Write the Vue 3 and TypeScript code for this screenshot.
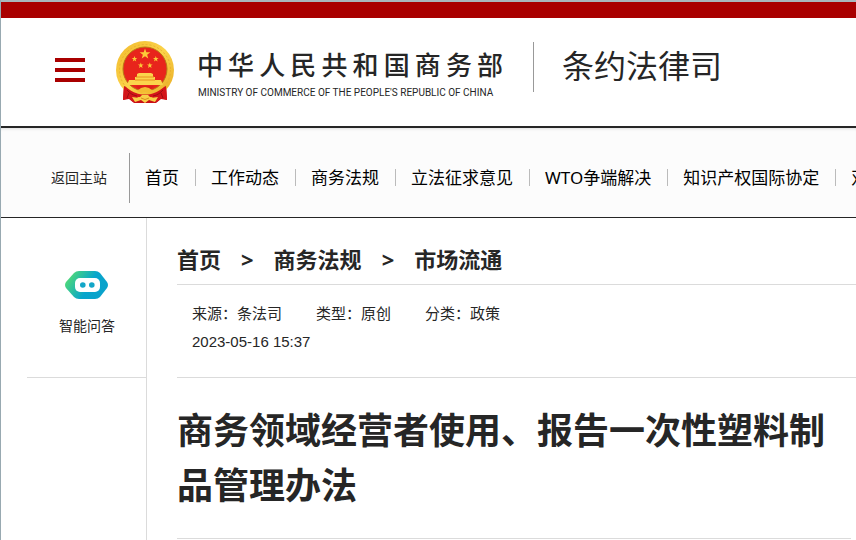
<script setup lang="ts">
interface Meta {
  label: string
  value: string
}

const navItems: string[] = [
  '首页',
  '工作动态',
  '商务法规',
  '立法征求意见',
  'WTO争端解决',
  '知识产权国际协定',
  '双边',
]

const crumbs: string[] = ['首页', '商务法规', '市场流通']

const meta: Meta[] = [
  { label: '来源', value: '条法司' },
  { label: '类型', value: '原创' },
  { label: '分类', value: '政策' },
]

function star(cx: number, cy: number, r: number): string {
  const points: string[] = []
  for (let i = 0; i < 10; i++) {
    const radius = i % 2 === 0 ? r : r * 0.4
    const angle = (Math.PI / 5) * i - Math.PI / 2
    points.push(`${(cx + radius * Math.cos(angle)).toFixed(2)},${(cy + radius * Math.sin(angle)).toFixed(2)}`)
  }
  return points.join(' ')
}

const stars: string[] = [
  star(29, 13, 5.6),
  star(18.5, 18, 3),
  star(39.8, 18, 3),
  star(24.8, 24.5, 3),
  star(33.8, 24.5, 3),
]
</script>

<template>
  <div class="page">
    <div class="topbar"></div>
    <header class="header">
      <button class="menu" type="button" aria-label="菜单">
        <span></span>
        <span></span>
        <span></span>
      </button>
      <a class="brand" href="#">
        <svg class="emblem" viewBox="0 0 58 63" aria-hidden="true">
          <defs>
            <linearGradient id="gold" x1="0" y1="0" x2="1" y2="1">
              <stop offset="0" stop-color="#f2ba2c" />
              <stop offset="0.5" stop-color="#fbd34a" />
              <stop offset="1" stop-color="#e7a820" />
            </linearGradient>
          </defs>
          <path d="M8 43 L7 59 L13 58 L18 62 H40 L45 58 L51 59 L50 43 Z" fill="#c90f16" />
          <circle cx="29" cy="29" r="29" fill="url(#gold)" />
          <circle cx="29" cy="29" r="25.5" fill="none" stroke="#e9b030" stroke-width="1" stroke-dasharray="2 2" />
          <circle cx="29" cy="28" r="22" fill="#e8241c" stroke="#b97716" stroke-width="1" />
          <polygon v-for="points in stars" :key="points" :points="points" fill="#fcca38" />
          <path d="M21 33 L23 32 H35 L37 33 V36 H39 V39 H45 L47 44 H11 L13 39 H19 V36 H21 Z" fill="#fbd44c" />
          <path d="M20 36 H38 M19 39 H39" stroke="#e9901f" stroke-width="1" />
          <path d="M20 45 H38 L35 48 H23 Z" fill="#dc2019" />
          <path d="M8 45 C11 46 14 50 20 52 C25 54 33 54 38 52 C44 50 47 46 50 45 L51 59 L45 57 L41 61 L36 56 H22 L17 61 L13 57 L7 59 Z" fill="#d4151a" />
          <path d="M11 49 C14 52 16 54 21 55 M47 49 C44 52 42 54 37 55 M11 57 L13 52 M47 57 L45 52" fill="none" stroke="#9c0d12" stroke-width="1" />
          <path d="M21 50 L25 47 L29 46 L33 47 L37 50 L33 52 L29 51 L25 52 Z" fill="#f4bb32" />
          <path d="M16 56 L23 57 L26 54 H32 L35 57 L42 56 L39 61 L33 59 L29 62 L25 59 L19 61 Z" fill="#f8cf48" />
          <path d="M25 57 Q29 60 33 57" fill="none" stroke="#d98e1e" stroke-width="1" />
        </svg>
        <span class="brand-text">
          <span class="brand-cn">中华人民共和国商务部</span>
          <span class="brand-en">MINISTRY OF COMMERCE OF THE PEOPLE'S REPUBLIC OF CHINA</span>
        </span>
      </a>
      <div class="department">条约法律司</div>
    </header>

    <nav class="nav">
      <a class="back" href="#">返回主站</a>
      <ul class="nav-list">
        <li v-for="item in navItems" :key="item">
          <a href="#">{{ item }}</a>
        </li>
      </ul>
    </nav>

    <div class="body">
      <aside class="sidebar">
        <a class="assistant" href="#">
          <svg class="robot" viewBox="0 0 44 28" aria-hidden="true">
            <defs>
              <linearGradient id="robot-fill" x1="0" y1="0.2" x2="1" y2="0.6">
                <stop offset="0.05" stop-color="#50da76" />
                <stop offset="0.6" stop-color="#08a5cc" />
                <stop offset="1" stop-color="#0aa2cb" />
              </linearGradient>
            </defs>
            <path d="M14 0 H30 Q33 0 35 2 L42 11 Q44 14 42 17 L35 26 Q33 28 30 28 H14 Q11 28 9 26 L1 17 Q-1 14 1 11 L9 2 Q11 0 14 0 Z" fill="url(#robot-fill)" />
            <rect x="10" y="7" width="25" height="14" rx="5" fill="#fff" />
            <circle cx="17.8" cy="14" r="2.8" fill="#12a6c8" />
            <circle cx="26.8" cy="14" r="2.8" fill="#12a6c8" />
          </svg>
          <span>智能问答</span>
        </a>
      </aside>
      <main class="content">
        <div class="crumbs">
          <template v-for="(crumb, index) in crumbs" :key="crumb">
            <span v-if="index > 0">&gt;</span>
            <a href="#">{{ crumb }}</a>
          </template>
        </div>
        <div class="meta">
          <div class="meta-row">
            <span v-for="entry in meta" :key="entry.label">{{ entry.label }}：{{ entry.value }}</span>
          </div>
          <time datetime="2023-05-16T15:37">2023-05-16 15:37</time>
        </div>
        <h1 class="title">商务领域经营者使用、报告一次性塑料制品管理办法</h1>
      </main>
    </div>
  </div>
</template>

<style>
body {
  background: #fff;
}
</style>

<style scoped>
.page {
  display: flex;
  flex-direction: column;
  box-sizing: border-box;
  min-height: 100vh;
  border-left: 1px solid #98a9b1;
  overflow: hidden;
  color: #262626;
  font-family: "Liberation Sans", "Noto Sans CJK SC", sans-serif;
}

a {
  color: inherit;
  text-decoration: none;
}

.topbar {
  height: 16px;
  border-top: 2px solid #a9b8bd;
  background: #a90000;
}

.header {
  display: flex;
  align-items: center;
  height: 108px;
  padding-left: 54px;
  border-bottom: 2px solid #262626;
  white-space: nowrap;
}

.menu {
  display: flex;
  flex-direction: column;
  gap: 6px;
  width: 30px;
  padding: 0 0 4px;
  border: 0;
  background: none;
}

.menu span {
  height: 4px;
  background: #a90000;
}

.brand {
  display: flex;
  align-items: center;
  margin-left: 31px;
}

.emblem {
  width: 58px;
  height: 63px;
}

.brand-text {
  display: flex;
  flex-direction: column;
  width: 306px;
  margin-left: 23px;
  padding-top: 5px;
}

.brand-cn {
  font-size: 26px;
  font-weight: 500;
  line-height: 36px;
  text-align-last: justify;
}

.brand-en {
  padding-left: 1px;
  font-family: Roboto, "Liberation Sans", sans-serif;
  font-size: 10px;
  line-height: 18px;
}

.department {
  margin-left: 30px;
  margin-bottom: 10px;
  padding-left: 28px;
  border-left: 1px solid #999;
  font-size: 32px;
  line-height: 50px;
}

.nav {
  display: flex;
  align-items: center;
  height: 89px;
  padding-left: 50px;
  border-bottom: 1px solid #262626;
  background: #fcfcfc;
  box-shadow: inset 0 3px 3px -2px #ddd;
  white-space: nowrap;
}

.back {
  margin-top: 10px;
  padding-right: 22px;
  border-right: 1px solid #999;
  font-size: 14px;
  line-height: 50px;
}

.nav-list {
  display: flex;
  margin: 10px 0 0;
  padding: 0;
  list-style: none;
  color: #000;
  font-family: "Noto Sans", "Noto Sans CJK SC", sans-serif;
  font-size: 17px;
  line-height: 17px;
}

.nav-list li {
  padding: 0 16px 0 15px;
  border-right: 1px solid #bbb;
}

.body {
  display: flex;
  flex: 1;
}

.sidebar {
  flex: none;
  box-sizing: border-box;
  width: 146px;
  padding-left: 26px;
  border-right: 1px solid #dbdbdb;
}

.assistant {
  display: flex;
  flex-direction: column;
  align-items: center;
  gap: 15px;
  box-sizing: border-box;
  height: 160px;
  padding-top: 53px;
  padding-left: 1px;
  border-bottom: 1px solid #dbdbdb;
  font-size: 14px;
  line-height: 24px;
}

.robot {
  width: 44px;
  height: 28px;
}

.content {
  flex: 1;
  min-width: 0;
  padding-left: 30px;
}

.crumbs {
  display: flex;
  gap: 20px;
  padding: 25px 0 8px;
  border-bottom: 1px solid #dbdbdb;
  font-family: "Noto Sans", "Noto Sans CJK SC", sans-serif;
  font-size: 22px;
  font-weight: 700;
  line-height: 33px;
}

.meta {
  padding: 15px 15px 21px;
  border-bottom: 1px solid #dbdbdb;
  font-size: 15px;
  line-height: 28px;
}

.meta-row {
  display: flex;
  gap: 34px;
}

.meta time {
  display: block;
}

.title {
  margin: 0 5px 0 0;
  padding: 26px 0 24px;
  border-bottom: 1px solid #dbdbdb;
  font-size: 36px;
  font-weight: 700;
  line-height: 55px;
}
</style>
